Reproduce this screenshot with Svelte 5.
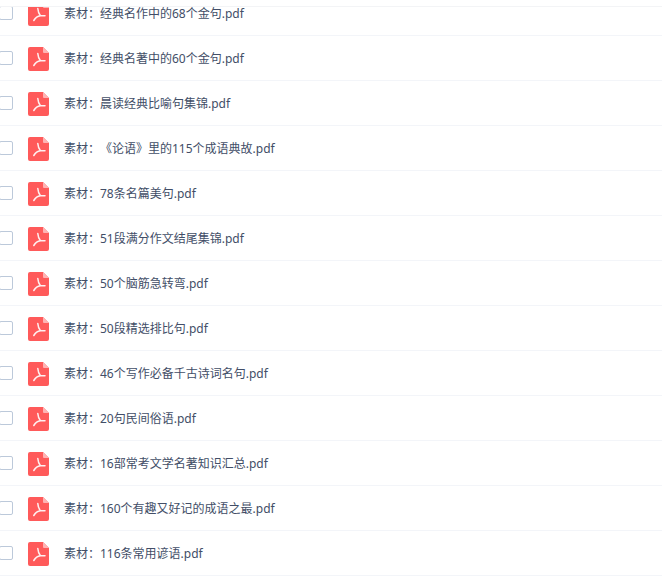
<script>
  const files = [
    '素材：经典名作中的68个金句.pdf',
    '素材：经典名著中的60个金句.pdf',
    '素材：晨读经典比喻句集锦.pdf',
    '素材：《论语》里的115个成语典故.pdf',
    '素材：78条名篇美句.pdf',
    '素材：51段满分作文结尾集锦.pdf',
    '素材：50个脑筋急转弯.pdf',
    '素材：50段精选排比句.pdf',
    '素材：46个写作必备千古诗词名句.pdf',
    '素材：20句民间俗语.pdf',
    '素材：16部常考文学名著知识汇总.pdf',
    '素材：160个有趣又好记的成语之最.pdf',
    '素材：116条常用谚语.pdf',
  ];
</script>

<div class="page">
  <div class="top"></div>
  <div class="viewport">
    <ul class="list">
      {#each files as name}
        <li class="row">
          <span class="check"></span>
          <svg class="icon" width="21" height="24" viewBox="0 0 21 24">
            <path d="M2 0H15L21 6V22a2 2 0 0 1-2 2H2a2 2 0 0 1-2-2V2a2 2 0 0 1 2-2z" fill="#ff5a5a" />
            <path d="M15 0L21 6H16a1 1 0 0 1-1-1z" fill="#ffb3b3" />
            <path d="M9.8 6.5C10 9.5 11 12 12.5 13.8M12.5 13.8H17M12.5 13.8C9.5 14.2 7.5 15.6 5.8 18.5" fill="none" stroke="#fff0f0" stroke-width="1.5" stroke-linecap="round" stroke-linejoin="round" />
          </svg>
          <span class="name">{name}</span>
        </li>
      {/each}
    </ul>
  </div>
</div>

<style>
  :global(body) {
    background: #fff;
  }

  .page {
    width: 662px;
    height: 583px;
    overflow: hidden;
    background: #fff;
  }

  .top {
    height: 6px;
    border-bottom: 1px solid #f3f4f6;
  }

  .viewport {
    height: 576px;
    overflow: hidden;
  }

  .list {
    list-style: none;
    margin: -16px 0 0;
    padding: 0;
  }

  .row {
    display: flex;
    align-items: center;
    height: 44px;
    border-bottom: 1px solid #f3f5f9;
    margin-left: -1px;
  }

  .check {
    flex: none;
    box-sizing: border-box;
    width: 14px;
    height: 14px;
    border: 1px solid #bcc9da;
    border-radius: 2px;
    margin-right: 15px;
  }

  .icon {
    flex: none;
    margin: 2px 15px 0 0;
  }

  .name {
    font-family: "Noto Sans", "Noto Sans CJK SC", "Liberation Sans", sans-serif;
    font-size: 12px;
    line-height: 12px;
    color: #424e67;
    text-spacing-trim: space-all;
    margin-top: 2px;
  }
</style>
